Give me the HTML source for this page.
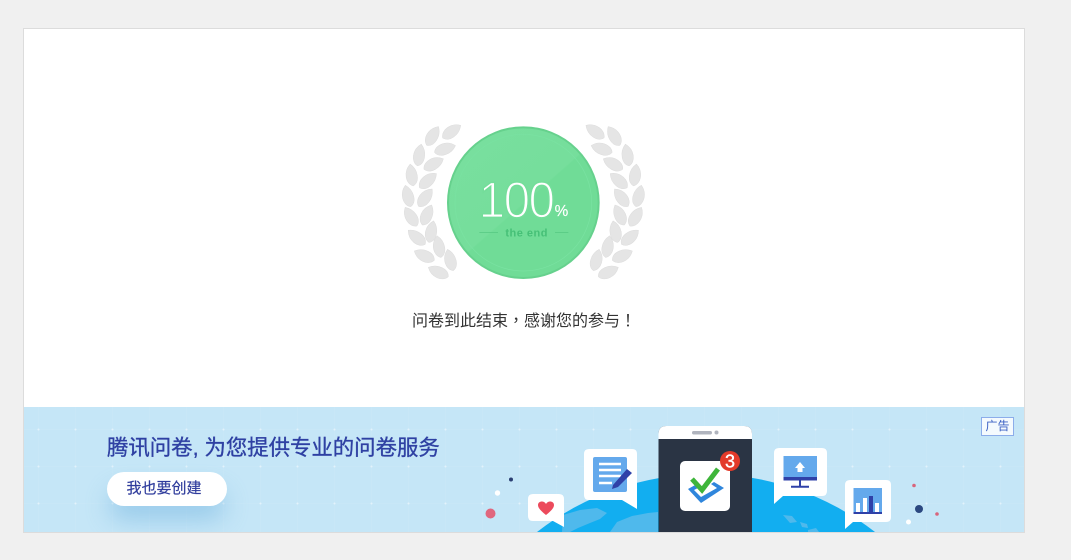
<!DOCTYPE html>
<html lang="zh">
<head>
<meta charset="utf-8">
<title>问卷</title>
<style>
html,body{margin:0;padding:0;height:560px;overflow:hidden;}
body{width:1071px;background:#f0f0f0;position:relative;font-family:"Liberation Sans","Noto Sans CJK SC",sans-serif;}
.card{position:absolute;left:23px;top:28px;width:1000px;height:503px;background:#fff;border:1px solid #dcdcdc;overflow:hidden;}
.msg{position:absolute;left:388px;top:278px;width:224px;text-align:center;font-size:16px;line-height:24px;color:#333;white-space:nowrap;}
.msg span{font-family:"Noto Sans CJK TC",sans-serif;}
.banner{position:absolute;left:0;top:378px;width:1000px;height:125px;background:#c5e6f7;overflow:hidden;}
.title{position:absolute;left:83px;top:25px;font-size:21.4px;line-height:32px;color:#2f41a3;white-space:nowrap;-webkit-text-stroke:.35px #2f41a3;}
.btn{position:absolute;left:83px;top:65px;width:120px;height:34px;border-radius:17px;background:#fff;box-shadow:0 16px 24px -2px rgba(100,170,220,.45);text-align:center;font-size:15px;line-height:34px;color:#2f3c9c;-webkit-text-stroke:.2px #2f3c9c;}
.btn span{position:relative;left:-3px;}
.ad{position:absolute;left:957px;top:10px;width:31px;height:17px;border:1px solid #8cadea;background:#f4fafe;color:#3c62c4;font-size:12px;line-height:16px;text-align:center;}
svg{position:absolute;left:0;top:0;display:block;overflow:hidden;}
</style>
</head>
<body>
<div class="card">
  <svg style="left:366px;top:81px" width="270" height="180" viewBox="0 0 810 540">
    <defs>
      <path id="l" d="M-33,0C-24,-22 13,-24 33,0C13,22 -24,22 -33,0Z" fill="#e5e5e5" stroke="#dcdcdc" stroke-width="1.500"/>
      <g id="w">
        <use href="#l" transform="translate(185,65) rotate(-35)"/>
        <use href="#l" transform="translate(128,78) rotate(-58)"/>
        <use href="#l" transform="translate(165,117) rotate(-18)"/>
        <use href="#l" transform="translate(88,135) rotate(-80)"/>
        <use href="#l" transform="translate(131,162) rotate(-28)"/>
        <use href="#l" transform="translate(65,195) rotate(-98)"/>
        <use href="#l" transform="translate(114,212) rotate(-40)"/>
        <use href="#l" transform="translate(54,258) rotate(-104)"/>
        <use href="#l" transform="translate(106,263) rotate(-52)"/>
        <use href="#l" transform="translate(63,320) rotate(-122)"/>
        <use href="#l" transform="translate(111,315) rotate(-65)"/>
        <use href="#l" transform="translate(80,382) rotate(-140)"/>
        <use href="#l" transform="translate(124,365) rotate(-78)"/>
        <use href="#l" transform="translate(103,437) rotate(-155)"/>
        <use href="#l" transform="translate(147,410) rotate(-100)"/>
        <use href="#l" transform="translate(145,486) rotate(-155)"/>
        <use href="#l" transform="translate(181,450) rotate(-105)"/>
      </g>
      <linearGradient id="g" x1="0.15" y1="0.1" x2="0.85" y2="0.9">
        <stop offset="0" stop-color="#78df9e"/><stop offset="0.5" stop-color="#76de9c"/><stop offset="0.51" stop-color="#70dc97"/><stop offset="1" stop-color="#70dc97"/>
      </linearGradient>
    </defs>
    <use href="#w"/>
    <use href="#w" transform="translate(800,0) scale(-1,1)"/>
    <circle cx="400" cy="278" r="226" fill="url(#g)" stroke="#66d18d" stroke-width="6"/>
    <circle cx="400" cy="278" r="205" fill="none" stroke="#7ae2a2" stroke-width="2"/>
    <text transform="translate(266,322) scale(.94,1)" font-family="Liberation Sans" font-size="152" letter-spacing="-5" fill="#fff" stroke="#74dd9a" stroke-width="5">100</text>
    <text x="494" y="318" font-family="Liberation Sans" font-size="46" fill="#fff" stroke="#fff" stroke-width=".5">%</text>
    <text x="346" y="379" font-family="Liberation Sans" font-size="33" font-weight="bold" fill="#46c077" letter-spacing="1.500">the end</text>
    <path d="M268 367H324M495 367H535" stroke="#50c47e" stroke-width="2"/>
  </svg>
  <div class="msg">问卷到此结束<span lang="zh-Hant">，</span>感谢您的参与<span lang="zh-Hant">！</span></div>
  <div class="banner">
    <svg width="1000" height="125" viewBox="24 407 1000 125">
      <defs>
        <pattern id="dots" x="20" y="411" width="37" height="37" patternUnits="userSpaceOnUse">
          <path d="M0 18.5H37M18.5 0V37" stroke="#fff" stroke-opacity=".05" stroke-width="1"/>
          <circle cx="18.5" cy="18.5" r="1" fill="#fff" fill-opacity=".5"/>
        </pattern>
      </defs>
      <rect x="24" y="407" width="1000" height="125" fill="url(#dots)"/>
      <!-- globe -->
      <path d="M537 532A275 275 0 0 1 875 532Z" fill="#12aef0"/>
      <g fill="#4fb9ec">
        <path d="M563 515L580 510L597 508L607 513L600 519L590 523L578 528L570 532H562Z"/>
        <path d="M610 532L617 522L632 516L648 513L658 512V532Z"/>
        <path d="M783 515L792 516L797 522L790 523ZM800 522L807 524L808 528L802 527ZM808 530L816 528L819 532H808Z"/>
      </g>
      <!-- left dots -->
      <circle cx="490.500" cy="513.500" r="5" fill="#e0677e"/>
      <circle cx="497.500" cy="493" r="2.700" fill="#fff"/>
      <circle cx="511" cy="479.500" r="2" fill="#2b3f72"/>
      <!-- heart bubble -->
      <path d="M533 494H559Q564 494 564 499V527L553 521H533Q528 521 528 516V499Q528 494 533 494Z" fill="#fff"/>
      <path d="M546 515C541 511 538 508 538 505C538 501 544 500 546 504C548 500 554 501 554 505C554 508 551 511 546 515Z" fill="#ec4a5c"/>
      <!-- doc bubble -->
      <path d="M589 449H632Q637 449 637 454V509L622 500H589Q584 500 584 495V454Q584 449 589 449Z" fill="#fff"/>
      <rect x="593" y="457" width="34" height="35" rx="2" fill="#64a9ec"/>
      <path d="M599 464H621M599 470H621M599 476H621M599 483H612" stroke="#fff" stroke-width="2.500"/>
      <path d="M613 485L627 469L632 473L618 487L612 489Z" fill="#2f41a8"/>
      <!-- phone -->
      <path d="M658.500 532V434Q658.500 426 666.500 426H744Q752 426 752 434V532Z" fill="#2a3444"/>
      <path d="M658.500 439V434Q658.500 426 666.500 426H744Q752 426 752 434V439Z" fill="#fff"/>
      <rect x="692" y="431" width="20" height="3.500" rx="1.700" fill="#b0b4be"/>
      <circle cx="716.500" cy="432.500" r="2" fill="#b0b4be"/>
      <rect x="680" y="461" width="50" height="50" rx="5" fill="#fff"/>
      <path d="M688 489L697 484L700 487L694 490L701 497L717 488L711 484L714 482L724 488L701 503Z" fill="#2f86dc"/>
      <path d="M692 479L702 490L718 469" fill="none" stroke="#3eb53a" stroke-width="5"/>
      <circle cx="730" cy="461" r="10" fill="#e33a2a"/>
      <text x="730" y="467.500" text-anchor="middle" font-family="Liberation Sans" font-size="18" fill="#fff" stroke="#fff" stroke-width=".4">3</text>
      <!-- monitor bubble -->
      <path d="M779 448H822Q827 448 827 453V491Q827 496 822 496H783L774 504V453Q774 448 779 448Z" fill="#fff"/>
      <rect x="783.500" y="456" width="33.500" height="21" fill="#64a9ec"/>
      <rect x="783.500" y="477" width="33.500" height="3.500" fill="#2f41a8"/>
      <path d="M800 480.500V486M791 486.700H809" stroke="#2f41a8" stroke-width="2"/>
      <path d="M800 462L805 468H802.500V472H797.500V468H795Z" fill="#fff"/>
      <!-- chart bubble -->
      <path d="M850 480H886Q891 480 891 485V517Q891 522 886 522H853L845 529V485Q845 480 850 480Z" fill="#fff"/>
      <rect x="853.500" y="488" width="28.500" height="24" fill="#64a9ec"/>
      <rect x="853.500" y="512" width="28.500" height="2" fill="#2f41a8"/>
      <rect x="856" y="503" width="4" height="9" fill="#fff"/>
      <rect x="863" y="498" width="4" height="14" fill="#fff"/>
      <rect x="869" y="496" width="4" height="16" fill="#2f41a8"/>
      <rect x="875" y="503" width="4" height="9" fill="#fff"/>
      <!-- right dots -->
      <circle cx="914" cy="485.500" r="1.800" fill="#d8657c"/>
      <circle cx="919" cy="509" r="4" fill="#2b4880"/>
      <circle cx="937" cy="514" r="1.800" fill="#d8657c"/>
      <circle cx="908.500" cy="522" r="2.500" fill="#fff"/>
    </svg>
    <div class="title">腾讯问卷, 为您提供专业的问卷服务</div>
    <div class="btn"><span>我也要创建</span></div>
    <div class="ad">广告</div>
  </div>
</div>
</body>
</html>
